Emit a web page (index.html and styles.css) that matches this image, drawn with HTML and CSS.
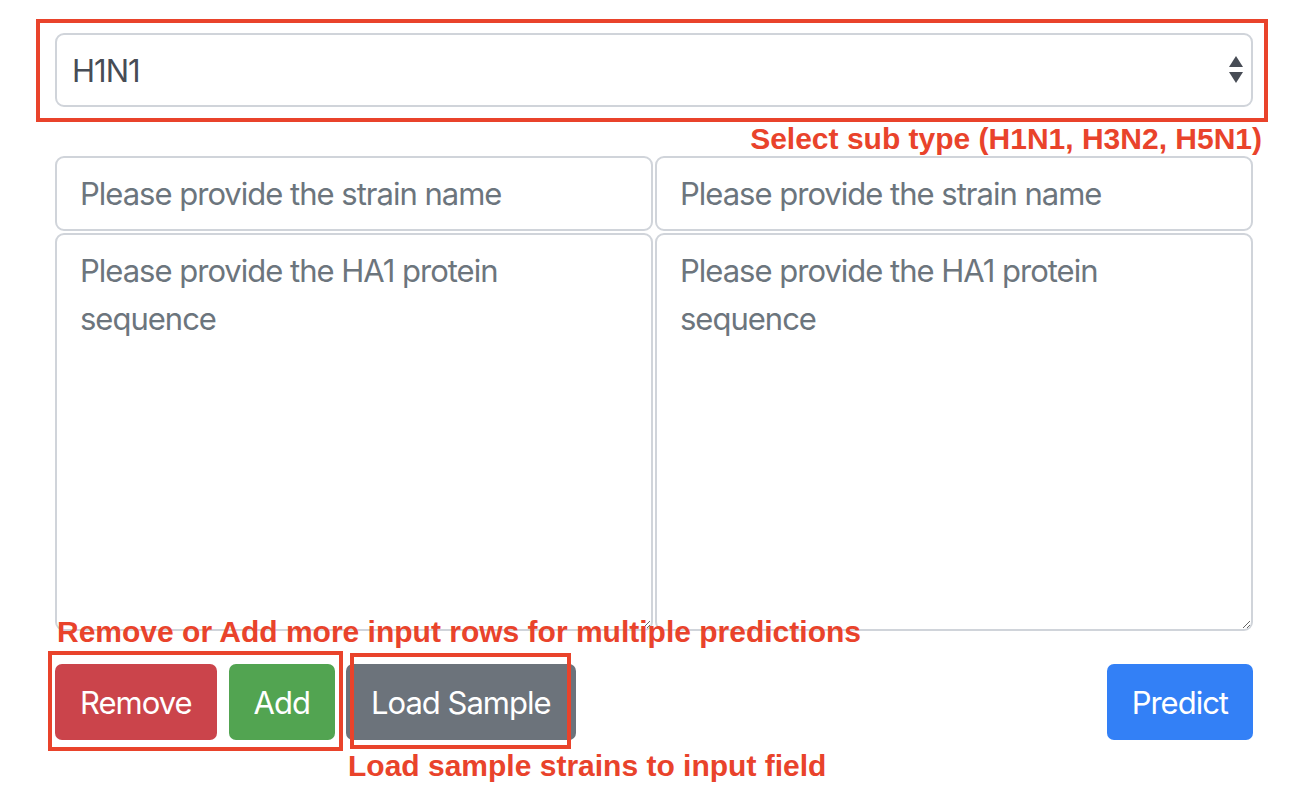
FILE: index.html
```html
<!DOCTYPE html>
<html lang="en">
<head>
<meta charset="utf-8">
<title>Flu prediction form</title>
<link rel="stylesheet" href="styles.css">
</head>
<body>
<div class="page">
  <form class="form">
    <div class="select-wrap">
      <select class="subtype">
        <option>H1N1</option>
        <option>H3N2</option>
        <option>H5N1</option>
      </select>
      <svg class="select-arrows" width="16" height="30" viewBox="0 0 16 30" aria-hidden="true">
        <path d="M8 1 L15 12 L1 12 Z" fill="#474c55"/>
        <path d="M1 17 L15 17 L8 28 Z" fill="#474c55"/>
      </svg>
    </div>

    <div class="grid">
      <input class="field strain" type="text" placeholder="Please provide the strain name">
      <input class="field strain" type="text" placeholder="Please provide the strain name">
      <textarea class="field seq" placeholder="Please provide the HA1 protein sequence"></textarea>
      <textarea class="field seq" placeholder="Please provide the HA1 protein sequence"></textarea>
    </div>

    <div class="actions">
      <button type="button" class="btn btn-remove">Remove</button>
      <button type="button" class="btn btn-add">Add</button>
      <button type="button" class="btn btn-load">Load Sample</button>
      <button type="button" class="btn btn-predict">Predict</button>
    </div>
  </form>

  <div class="mark mark-select"></div>
  <div class="note note-select">Select sub type (H1N1, H3N2, H5N1)</div>
  <div class="note note-rows">Remove or Add more input rows for multiple predictions</div>
  <div class="mark mark-rows"></div>
  <div class="mark mark-load"></div>
  <div class="note note-load">Load sample strains to input field</div>
</div>
</body>
</html>
```

FILE: styles.css
```css
* { box-sizing: border-box; }

html, body {
  margin: 0;
  padding: 0;
  background: #ffffff;
}

body {
  font-family: Inter, "Noto Sans", "Liberation Sans", sans-serif;
  color: #495057;
}

.page {
  position: relative;
  width: 1304px;
  height: 788px;
  overflow: hidden;
}

.form {
  padding: 33px 0 0 55px;
  width: 1253px;
}

.select-wrap {
  position: relative;
}

.subtype {
  display: block;
  width: 100%;
  height: 74px;
  margin: 0;
  padding: 0 60px 0 15px;
  border: 2px solid #d0d4da;
  border-radius: 9px;
  background: #ffffff;
  font-family: inherit;
  font-size: 31px;
  letter-spacing: -1px;
  color: #474c55;
  appearance: none;
  -webkit-appearance: none;
  outline: none;
}

.select-arrows {
  position: absolute;
  right: 9px;
  top: 22px;
}

.grid {
  display: grid;
  grid-template-columns: 598px 598px;
  grid-template-rows: 75px 398px;
  column-gap: 2px;
  row-gap: 2px;
  margin-top: 49px;
}

.field {
  display: block;
  width: 100%;
  margin: 0;
  border: 2px solid #d0d4da;
  border-radius: 9px;
  background: #ffffff;
  font-family: inherit;
  font-size: 31px;
  letter-spacing: -1px;
  line-height: 48px;
  color: #495057;
  outline: none;
}

.field::placeholder {
  color: #6c757d;
  opacity: 1;
}

.strain {
  height: 75px;
  padding: 0 23px;
}

.seq {
  height: 398px;
  padding: 12px 23px;
  resize: vertical;
}

.actions {
  display: flex;
  align-items: center;
  margin-top: 33px;
  gap: 11px;
}

.btn {
  height: 76px;
  padding: 0 24px;
  border: 1px solid transparent;
  border-radius: 7px;
  font-family: inherit;
  font-size: 31px;
  letter-spacing: -1px;
  color: #ffffff;
  cursor: pointer;
}

.btn-remove { background: #cb444b; }
.btn-add { background: #52a451; margin-left: 1px; }
.btn-load { background: #6c737b; }
.btn-predict { background: #3380f6; margin-left: auto; }

/* annotation overlays */
.mark {
  position: absolute;
  border: 4px solid #e9432b;
}

.mark-select { left: 36px; top: 19px; width: 1232px; height: 103px; }
.mark-rows { left: 48px; top: 651px; width: 295px; height: 100px; }
.mark-load { left: 350px; top: 653px; width: 221px; height: 96px; }

.note {
  position: absolute;
  font-family: "Liberation Sans", Arial, sans-serif;
  font-weight: bold;
  font-size: 30px;
  line-height: 30px;
  color: #e9432b;
  white-space: nowrap;
}

.note-select { right: 42px; top: 124px; }
.note-rows { left: 57px; top: 617px; }
.note-load { left: 348px; top: 751px; }
```
